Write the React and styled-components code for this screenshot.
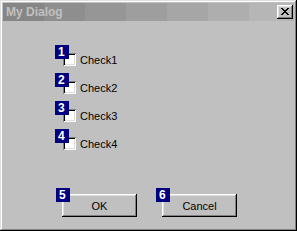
import React from 'react';
import styled, { createGlobalStyle } from 'styled-components';

const Global = createGlobalStyle`
  html, body {
    margin: 0;
    padding: 0;
    overflow: hidden;
    background: #c0c0c0;
  }
`

const Window = styled.div`
  box-sizing: border-box;
  width: 297px;
  height: 231px;
  padding: 3px;
  display: flex;
  flex-direction: column;
  background: #c0c0c0;
  font-family: "Liberation Sans", Arial, sans-serif;
  box-shadow:
    inset -1px -1px #000,
    inset 1px 1px #dfdfdf,
    inset -2px -2px #808080,
    inset 2px 2px #fff;
`

const TitleBar = styled.div`
  height: 18px;
  display: flex;
  align-items: center;
  justify-content: space-between;
  padding: 0 1px 0 3px;
  background: linear-gradient(to right,
    #868686 0 41px, #8e8e8e 41px 82px, #969696 82px 123px,
    #9e9e9e 123px 164px, #a6a6a6 164px 205px, #aeaeae 205px 246px,
    #b6b6b6 246px 100%);
`

const Title = styled.span`
  color: #c0c0c0;
  font-weight: bold;
  font-size: 12px;
  line-height: 14px;
`

const CloseButton = styled.div`
  width: 16px;
  height: 14px;
  display: flex;
  align-items: center;
  justify-content: center;
  background: #c0c0c0;
  box-shadow:
    inset -1px -1px #000,
    inset 1px 1px #fff,
    inset -2px -2px #808080,
    inset 2px 2px #dfdfdf;
  svg { display: block; margin: -1px 0 0 -1px; }
`

const Body = styled.div`
  flex: 1;
  display: flex;
  flex-direction: column;
  padding: 32px 0 0 59px;
`

const CheckList = styled.div`
  display: flex;
  flex-direction: column;
  gap: 15px;
  padding-left: 1px;
`

const CheckRow = styled.label`
  display: flex;
  align-items: center;
  height: 13px;
  gap: 4px;
  font-size: 11px;
  color: #000;
`

const LabelText = styled.span`
  line-height: 11px;
  margin-top: 2px;
`

const Box = styled.span`
  position: relative;
  width: 13px;
  height: 13px;
  background: #fff;
  box-shadow:
    inset 1px 1px #808080,
    inset -1px -1px #fff,
    inset 2px 2px #000,
    inset -2px -2px #dfdfdf;
`

const Badge = styled.span`
  position: absolute;
  left: ${p => p.$dx}px;
  top: ${p => p.$dy}px;
  box-sizing: border-box;
  width: 14px;
  height: 14px;
  padding-left: 3px;
  background: #000080;
  color: #fff;
  font-weight: bold;
  font-size: 12px;
  line-height: 15px;
`

const ButtonRow = styled.div`
  display: flex;
  gap: 25px;
  margin-top: 44px;
`

const Button = styled.div`
  position: relative;
  width: 75px;
  height: 23px;
  display: flex;
  align-items: center;
  justify-content: center;
  font-size: 11px;
  color: #000;
  background: #c0c0c0;
  box-shadow:
    inset -1px -1px #000,
    inset 1px 1px #fff,
    inset -2px -2px #808080,
    inset 2px 2px #dfdfdf;
`

const checks = ['Check1', 'Check2', 'Check3', 'Check4'];

export default function App() {
  return (
    <>
      <Global />
      <Window>
        <TitleBar>
          <Title>My Dialog</Title>
          <CloseButton>
            <svg width="8" height="7" viewBox="0 0 8 7" shapeRendering="crispEdges">
              <path fill="#000" d="M0 0h2v1h-2zM6 0h2v1h-2zM1 1h2v1h-2zM5 1h2v1h-2zM2 2h4v1h-4zM3 3h2v1h-2zM2 4h4v1h-4zM1 5h2v1h-2zM5 5h2v1h-2zM0 6h2v1h-2zM6 6h2v1h-2z" />
            </svg>
          </CloseButton>
        </TitleBar>
        <Body>
          <CheckList>
            {checks.map((c, i) => (
              <CheckRow key={c}>
                <Box>
                  <Badge $dx={-8} $dy={-8}>{i + 1}</Badge>
                </Box>
                <LabelText>{c}</LabelText>
              </CheckRow>
            ))}
          </CheckList>
          <ButtonRow>
            <Button>
              <Badge $dx={-6} $dy={-6}>5</Badge>
              OK
            </Button>
            <Button>
              <Badge $dx={-6} $dy={-6}>6</Badge>
              Cancel
            </Button>
          </ButtonRow>
        </Body>
      </Window>
    </>
  )
}
